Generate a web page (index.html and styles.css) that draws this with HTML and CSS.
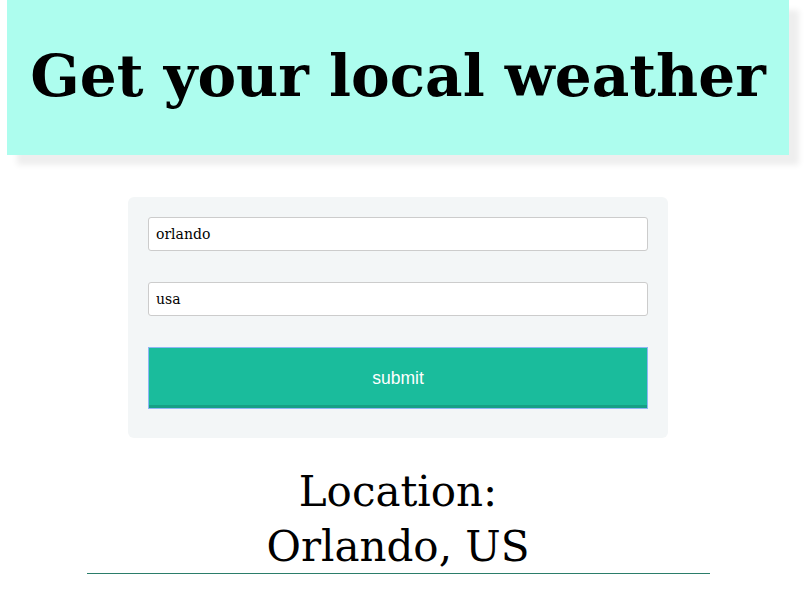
FILE: index.html
```html
<!DOCTYPE html>
<html>
<head>
<meta charset="utf-8">
<link rel="stylesheet" href="styles.css">
</head>
<body>
<div class="page">
  <header class="banner">
    <h1 class="title">Get your local weather</h1>
  </header>
  <form class="card">
    <input class="field" type="text" value="orlando">
    <input class="field" type="text" value="usa">
    <button class="submit" type="button">submit</button>
  </form>
  <div class="result">
    <h2 class="location">Location:<br>Orlando, US</h2>
    <hr class="rule">
  </div>
</div>
</body>
</html>
```
FILE: styles.css
```css
html, body {
  margin: 0;
  padding: 0;
  background: #ffffff;
}
.page {
  width: 782px;
  margin-left: 7px;
  font-family: "DejaVu Serif", "Liberation Serif", serif;
}
.banner {
  height: 155px;
  background: #adfdee;
  box-shadow: 10px 10px 6px #eeeeee;
  display: flex;
  align-items: center;
  justify-content: center;
}
.title {
  margin: 0;
  font-size: 58px;
  font-weight: bold;
  color: #000;
  white-space: nowrap;
  transform: translateY(-2px);
}
.card {
  width: 500px;
  margin: 42px auto 0;
  padding: 20px 20px 29px;
  background: #f3f6f7;
  border-radius: 6px;
  display: flex;
  flex-direction: column;
  gap: 31px;
}
.field {
  box-sizing: border-box;
  width: 100%;
  height: 34px;
  margin: 0;
  padding: 0 7px;
  border: 1px solid #cccccc;
  border-radius: 3px;
  background: #fff;
  font-family: "DejaVu Serif", "Liberation Serif", serif;
  font-size: 14px;
  color: #000;
}
.submit {
  box-sizing: border-box;
  width: 100%;
  height: 62px;
  margin: 0;
  border: 1px solid #8fb6f5;
  outline: none;
  background: #1abc9c;
  color: #fff;
  font-family: "Liberation Sans", Arial, sans-serif;
  font-size: 17.5px;
  box-shadow: inset 0 -3px 0 #16a085;
}
.result {
  margin-top: 26px;
  text-align: center;
}
.location {
  margin: 0;
  font-size: 42px;
  font-weight: normal;
  line-height: 55px;
}
.rule {
  width: 623px;
  margin: -1px auto 0;
  border: 0;
  border-top: 1px solid #2b7d6a;
  height: 0;
}
```
